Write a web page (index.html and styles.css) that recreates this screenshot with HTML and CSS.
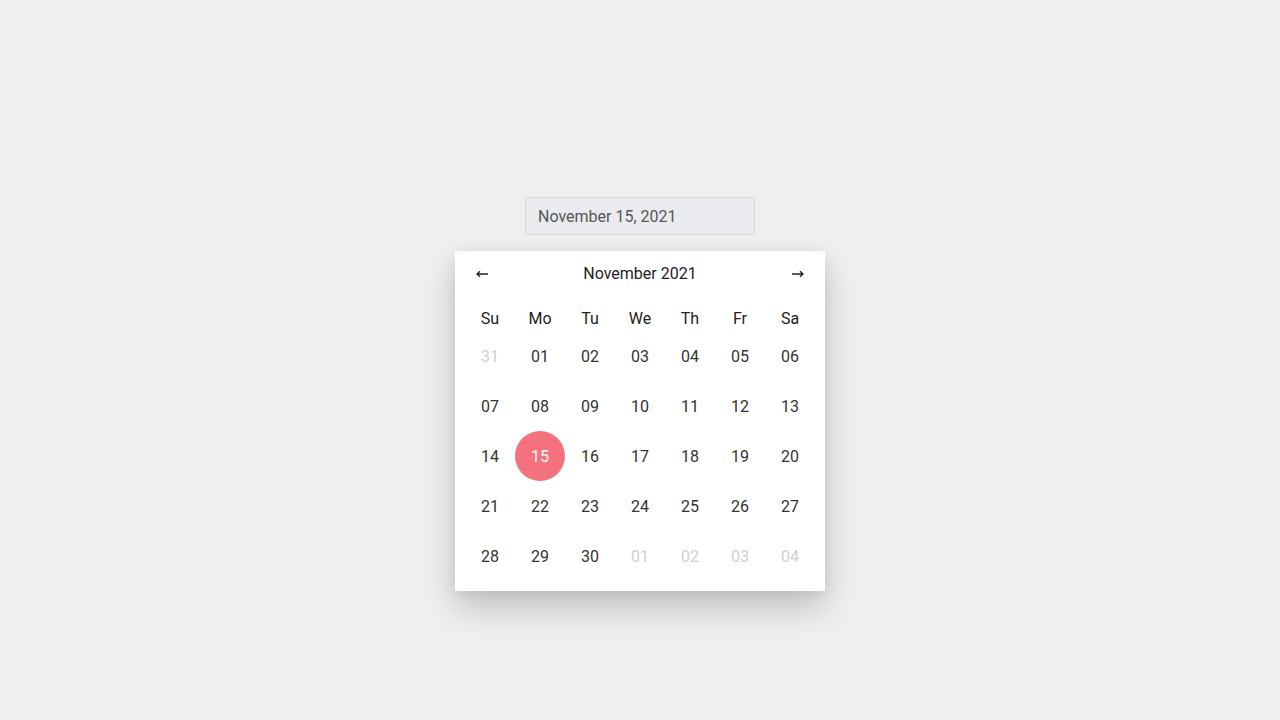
FILE: index.html
```html
<!DOCTYPE html>
<html>
<head>
<meta charset="utf-8">
<link rel="stylesheet" href="styles.css">
</head>
<body>
<div class="page">
  <div class="input">November 15, 2021</div>
  <div class="calendar">
    <div class="header">
      <span class="nav"><svg width="12" height="8" viewBox="0 0 12 8"><path d="M12 4H1M4 1.2L1 4L4 6.8" fill="none" stroke="#222" stroke-width="1.3"/></svg></span>
      <span class="title">November 2021</span>
      <span class="nav"><svg width="12" height="8" viewBox="0 0 12 8"><path d="M0 4H11M8 1.2L11 4L8 6.8" fill="none" stroke="#222" stroke-width="1.3"/></svg></span>
    </div>
    <div class="weekdays">
      <span>Su</span><span>Mo</span><span>Tu</span><span>We</span><span>Th</span><span>Fr</span><span>Sa</span>
    </div>
    <div class="days">
      <span class="muted">31</span><span>01</span><span>02</span><span>03</span><span>04</span><span>05</span><span>06</span>
      <span>07</span><span>08</span><span>09</span><span>10</span><span>11</span><span>12</span><span>13</span>
      <span>14</span><span class="selected">15</span><span>16</span><span>17</span><span>18</span><span>19</span><span>20</span>
      <span>21</span><span>22</span><span>23</span><span>24</span><span>25</span><span>26</span><span>27</span>
      <span>28</span><span>29</span><span>30</span><span class="muted">01</span><span class="muted">02</span><span class="muted">03</span><span class="muted">04</span>
    </div>
  </div>
</div>
</body>
</html>
```
FILE: styles.css
```css
html, body {
  margin: 0;
  padding: 0;
  background: #efefef;
  font-family: Roboto, "Liberation Sans", sans-serif;
  color: #333;
}
.page {
  width: 1280px;
  height: 720px;
  display: flex;
  flex-direction: column;
  align-items: center;
  padding-top: 197px;
  box-sizing: border-box;
}
.input {
  width: 230px;
  height: 38px;
  box-sizing: border-box;
  background: #e9ebee;
  border: 1px solid #d4d6d9;
  border-radius: 3px;
  padding: 0 12px;
  display: flex;
  align-items: center;
  font-size: 16px;
  color: #555;
}
.calendar {
  margin-top: 16px;
  width: 370px;
  height: 340px;
  box-sizing: border-box;
  background: #fff;
  padding: 0 10px 10px;
  box-shadow: 0 16px 32px rgba(0,0,0,0.2), 0 2px 12px rgba(0,0,0,0.06);
}
.header {
  height: 44px;
  display: flex;
  align-items: center;
  justify-content: space-between;
  padding: 0 11px 0 11px;
  color: #222;
}
.nav {
  display: flex;
  align-items: center;
  width: 12px;
  height: 8px;
  margin-top: 1px;
}
.title {
  font-size: 16px;
  color: #222;
}
.weekdays {
  margin-top: 10px;
  height: 26px;
  display: grid;
  grid-template-columns: repeat(7, 50px);
  align-items: center;
}
.weekdays span {
  text-align: center;
  font-size: 16px;
  font-weight: 400;
  color: #222;
}
.days {
  display: grid;
  grid-template-columns: repeat(7, 50px);
  grid-auto-rows: 50px;
}
.days span {
  display: flex;
  align-items: center;
  justify-content: center;
  font-size: 16px;
  color: #333;
}
.days .muted {
  color: #cfcfcf;
}
.days .selected {
  background: #f4727e;
  color: #fff;
  border-radius: 50%;
}
```
